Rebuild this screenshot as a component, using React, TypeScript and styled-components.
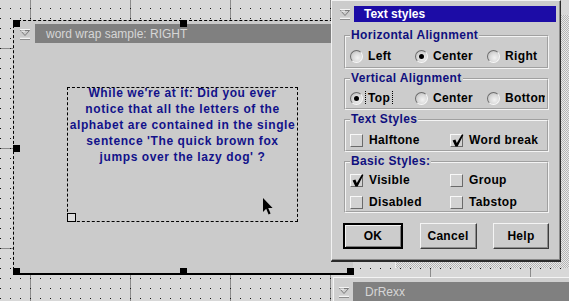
import React from 'react';
import styled, { createGlobalStyle } from 'styled-components';

const GlobalStyle = createGlobalStyle`
    html, body {
        margin: 0;
        padding: 0;
        overflow: hidden;
        background: #d6d6d6;
    }
`;

const UI_FONT = `"Liberation Sans", Arial, sans-serif`;

// desktop of the dialog editor: dot grid + ruler lines every 100px
const Desktop = styled.div`
    position: relative;
    width: 569px;
    height: 301px;
    overflow: hidden;
    font-family: ${UI_FONT};
    background-color: #d8d8d8;
    background-image:
        conic-gradient(from 270deg at 1px 1px, #111 90deg, transparent 0),
        linear-gradient(to right, transparent 30px, #8c8c8c 30px, #8c8c8c 31px, transparent 31px),
        linear-gradient(to bottom, transparent 48px, #8c8c8c 48px, #8c8c8c 49px, transparent 49px);
    background-size: 10px 10px, 100px 100%, 100% 100px;
    background-position: 0 8px, 0 0, 0 0;
`;

const Hatch = styled.div`
    position: absolute;
    left: 395px;
    top: 15px;
    width: 180px;
    height: 253px;
    background: repeating-conic-gradient(#b4b4b4 0 25%, #e8e8e8 0 50%) 0 0 / 2px 2px;
    border-left: 1px solid #f0f0f0;
`;

/* ---------- designed window ---------- */

const DesignWindow = styled.div`
    position: absolute;
    left: 13px;
    top: 20px;
    width: 340px;
    height: 255px;
    box-sizing: border-box;
    display: flex;
    flex-direction: column;
    padding-top: 3px;
    background: #cbcbcb;
    border-left: 1px dashed #000;
    border-top: 1px dashed #000;
    border-bottom: 2px solid #000;
`;

const TitleRow = styled.div<{ $h: number; $slot: number }>`
    display: flex;
    height: ${({ $h }) => $h}px;
    flex-shrink: 0;

    & > span {
        width: ${({ $slot }) => $slot}px;
        display: flex;
        align-items: center;
        justify-content: center;
    }
`;

const TitleBar = styled.div<{ $active?: boolean; $pad: number }>`
    flex: 1;
    display: flex;
    align-items: center;
    padding-left: ${({ $pad }) => $pad}px;
    background: ${({ $active }) => ($active ? '#1c0ca6' : '#808080')};
    color: ${({ $active }) => ($active ? '#ffffff' : '#d6d6d6')};
    font-size: 12px;
    font-weight: ${({ $active }) => ($active ? 700 : 400)};
    white-space: nowrap;
    overflow: hidden;
`;

const Canvas = styled.div`
    flex: 1;
    padding: 44px 0 0 53px;
`;

const TextControl = styled.div`
    position: relative;
    width: 231px;
    height: 135px;
    box-sizing: border-box;
    border: 1px dashed #000;
    display: flex;
    flex-direction: column;
    align-items: center;
`;

const TextLine = styled.div`
    white-space: nowrap;
    font-size: 12px;
    line-height: 16px;
    font-weight: 700;
    letter-spacing: 0.6px;
    color: #12128a;

    &:first-child {
        margin-top: -3px;
    }
`;

const CornerBox = styled.div`
    position: absolute;
    left: -1px;
    bottom: -1px;
    width: 7px;
    height: 7px;
    border: 1px solid #000;
    background: #dcdcdc;
`;

const Handle = styled.div<{ $x: number; $y: number }>`
    position: absolute;
    left: ${({ $x }) => $x}px;
    top: ${({ $y }) => $y}px;
    width: 7px;
    height: 7px;
    background: #000;
`;

const Cursor = styled.svg`
    position: absolute;
    left: 249px;
    top: 177px;
`;

/* ---------- Text styles dialog ---------- */

const Dialog = styled.div`
    position: absolute;
    left: 331px;
    top: 0;
    width: 230px;
    height: 261px;
    box-sizing: border-box;
    padding: 5px 4px 0;
    background: #cccccc;
    border: 1px solid;
    border-color: #f2f2f2 #2a2a2a #2a2a2a #f2f2f2;
    box-shadow: inset -1px -1px 0 #8a8a8a, 0 1px 0 #2a2a2a;
    display: flex;
    flex-direction: column;
`;

const DialogBody = styled.div`
    display: flex;
    flex-direction: column;
    gap: 3px;
    padding: 7px 7px 0 8px;
`;

const Group = styled.fieldset<{ $pt: number; $pb: number }>`
    margin: 0;
    min-inline-size: 0;
    padding: ${({ $pt }) => $pt}px 2px ${({ $pb }) => $pb}px 4px;
    border: 2px groove #f4f4f4;
    display: flex;
    flex-direction: column;
    gap: 8px;
`;

const Legend = styled.legend`
    padding: 0 1px;
    margin: 0;
    font-size: 12px;
    line-height: 13px;
    font-weight: 700;
    letter-spacing: 0.35px;
    color: #10107e;
`;

const OptionRow = styled.div<{ $cols: string }>`
    display: grid;
    grid-template-columns: ${({ $cols }) => $cols};
    height: 14px;
    align-items: center;
`;

const Option = styled.div`
    display: flex;
    align-items: center;
    gap: 5px;
    font-size: 12px;
    font-weight: 700;
    letter-spacing: 0.35px;
    color: #000;
    white-space: nowrap;
    overflow: hidden;
`;

const RadioDot = styled.span<{ $on?: boolean }>`
    flex-shrink: 0;
    width: 13px;
    height: 13px;
    box-sizing: border-box;
    border-radius: 50%;
    border: 1px solid;
    border-color: #6c6c6c #f8f8f8 #f8f8f8 #6c6c6c;
    background: radial-gradient(circle at 60% 62%, #f2f2f2 0, #dcdcdc 45%, #b4b4b4 100%);
    display: flex;
    align-items: center;
    justify-content: center;

    &::after {
        content: '';
        width: 5px;
        height: 5px;
        border-radius: 50%;
        background: ${({ $on }) => ($on ? '#000' : 'transparent')};
    }
`;

const Focus = styled.span`
    outline: 1px dotted #000;
    outline-offset: 2px;
`;

const CheckBox = styled.span`
    position: relative;
    flex-shrink: 0;
    width: 13px;
    height: 13px;
    box-sizing: border-box;
    border: 1px solid;
    border-color: #f8f8f8 #6a6a6a #6a6a6a #f8f8f8;
    background: #d2d2d2;
    margin-right: 1px;

    & > svg {
        position: absolute;
        left: 0;
        top: -2px;
    }
`;

const ButtonRow = styled.div`
    display: flex;
    justify-content: space-between;
    margin: 7px 0 0 -1px;
`;

const Button = styled.button<{ $w: number; $default?: boolean }>`
    width: ${({ $w }) => $w}px;
    height: 26px;
    padding: 0;
    font-family: ${UI_FONT};
    font-size: 12px;
    font-weight: 700;
    letter-spacing: 0.3px;
    color: #000;
    background: #cccccc;
    border: ${({ $default }) => ($default ? '2px solid #000' : '1px solid')};
    border-color: ${({ $default }) => ($default ? '#000' : '#f4f4f4 #3c3c3c #3c3c3c #f4f4f4')};
    box-shadow: ${({ $default }) =>
        $default
            ? 'inset 1px 1px 0 #f4f4f4, inset -1px -1px 0 #7c7c7c'
            : 'inset -1px -1px 0 #8c8c8c'};
`;

/* ---------- DrRexx window ---------- */

const BackWindow = styled.div`
    position: absolute;
    left: 333px;
    top: 277px;
    width: 250px;
    height: 40px;
    box-sizing: border-box;
    padding-top: 4px;
    background: #cfcfcf;
    border-top: 1px solid #f4f4f4;
    border-left: 1px solid #f4f4f4;
`;

const SysIcon: React.FC = () => (
    <svg width="12" height="12" viewBox="0 0 12 12">
        <path d="M1 1.5 H11" stroke="#f4f4f4" strokeWidth="1" />
        <path d="M1.5 2.5 L10.5 2.5 L6 7.5 Z" fill="none" stroke="#7a7a7a" strokeWidth="1" />
        <path d="M2 3 L6 3" stroke="#ffffff" strokeWidth="1" />
        <path d="M1 10.5 H11" stroke="#f4f4f4" strokeWidth="1.5" />
        <path d="M1 11.5 H11" stroke="#7a7a7a" strokeWidth="0.8" />
    </svg>
);

const Check: React.FC = () => (
    <svg width="14" height="15" viewBox="0 0 14 15">
        <path d="M1.6 7.6 L4.4 6.4 L5.8 10 L11 1.2 L12.4 2 L6.6 13.6 L4.4 13.6 Z" fill="#000" />
    </svg>
);

const lines = [
    "While we're at it: Did you ever",
    'notice that all the letters of the',
    'alphabet are contained in the single',
    "sentence 'The quick brown fox",
    "jumps over the lazy dog' ?",
];

const handles = [
    [-1, -1],
    [166, -1],
    [-1, 124],
    [-1, 247],
    [166, 247],
    [333, 247],
];

const App: React.FC = () => {
    return (
        <>
            <GlobalStyle />
            <Desktop>
                <Hatch />

                <DesignWindow>
                    <TitleRow $h={19} $slot={21}>
                        <span>
                            <SysIcon />
                        </span>
                        <TitleBar $pad={11}>word wrap sample: RIGHT</TitleBar>
                    </TitleRow>
                    <Canvas>
                        <TextControl>
                            {lines.map((l) => (
                                <TextLine key={l}>{l}</TextLine>
                            ))}
                            <CornerBox />
                        </TextControl>
                    </Canvas>
                    {handles.map(([x, y], i) => (
                        <Handle key={i} $x={x} $y={y} />
                    ))}
                    <Cursor width="11" height="18" viewBox="0 0 11 18">
                        <path d="M0 0 L0 14 L3.2 10.8 L5.6 16.5 L7.6 15.6 L5.2 10 L9.6 10 Z" fill="#000" />
                    </Cursor>
                </DesignWindow>

                <BackWindow>
                    <TitleRow $h={20} $slot={19}>
                        <span>
                            <SysIcon />
                        </span>
                        <TitleBar $pad={12}>DrRexx</TitleBar>
                    </TitleRow>
                </BackWindow>

                <Dialog>
                    <TitleRow $h={16} $slot={18}>
                        <span>
                            <SysIcon />
                        </span>
                        <TitleBar $active $pad={10}>Text styles</TitleBar>
                    </TitleRow>

                    <DialogBody>
                        <Group $pt={7} $pb={4}>
                            <Legend>Horizontal Alignment</Legend>
                            <OptionRow $cols="65px 72px 1fr">
                                <Option><RadioDot />Left</Option>
                                <Option><RadioDot $on />Center</Option>
                                <Option><RadioDot />Right</Option>
                            </OptionRow>
                        </Group>

                        <Group $pt={6} $pb={3}>
                            <Legend>Vertical Alignment</Legend>
                            <OptionRow $cols="65px 72px 1fr">
                                <Option><RadioDot $on /><Focus>Top</Focus></Option>
                                <Option><RadioDot />Center</Option>
                                <Option><RadioDot />Bottom</Option>
                            </OptionRow>
                        </Group>

                        <Group $pt={7} $pb={3}>
                            <Legend>Text Styles</Legend>
                            <OptionRow $cols="100px 1fr">
                                <Option><CheckBox />Halftone</Option>
                                <Option><CheckBox><Check /></CheckBox>Word break</Option>
                            </OptionRow>
                        </Group>

                        <Group $pt={5} $pb={2}>
                            <Legend>Basic Styles:</Legend>
                            <OptionRow $cols="100px 1fr">
                                <Option><CheckBox><Check /></CheckBox>Visible</Option>
                                <Option><CheckBox />Group</Option>
                            </OptionRow>
                            <OptionRow $cols="100px 1fr">
                                <Option><CheckBox />Disabled</Option>
                                <Option><CheckBox />Tabstop</Option>
                            </OptionRow>
                        </Group>

                        <ButtonRow>
                            <Button $w={60} $default>OK</Button>
                            <Button $w={57}>Cancel</Button>
                            <Button $w={56}>Help</Button>
                        </ButtonRow>
                    </DialogBody>
                </Dialog>
            </Desktop>
        </>
    );
};

export default App;
